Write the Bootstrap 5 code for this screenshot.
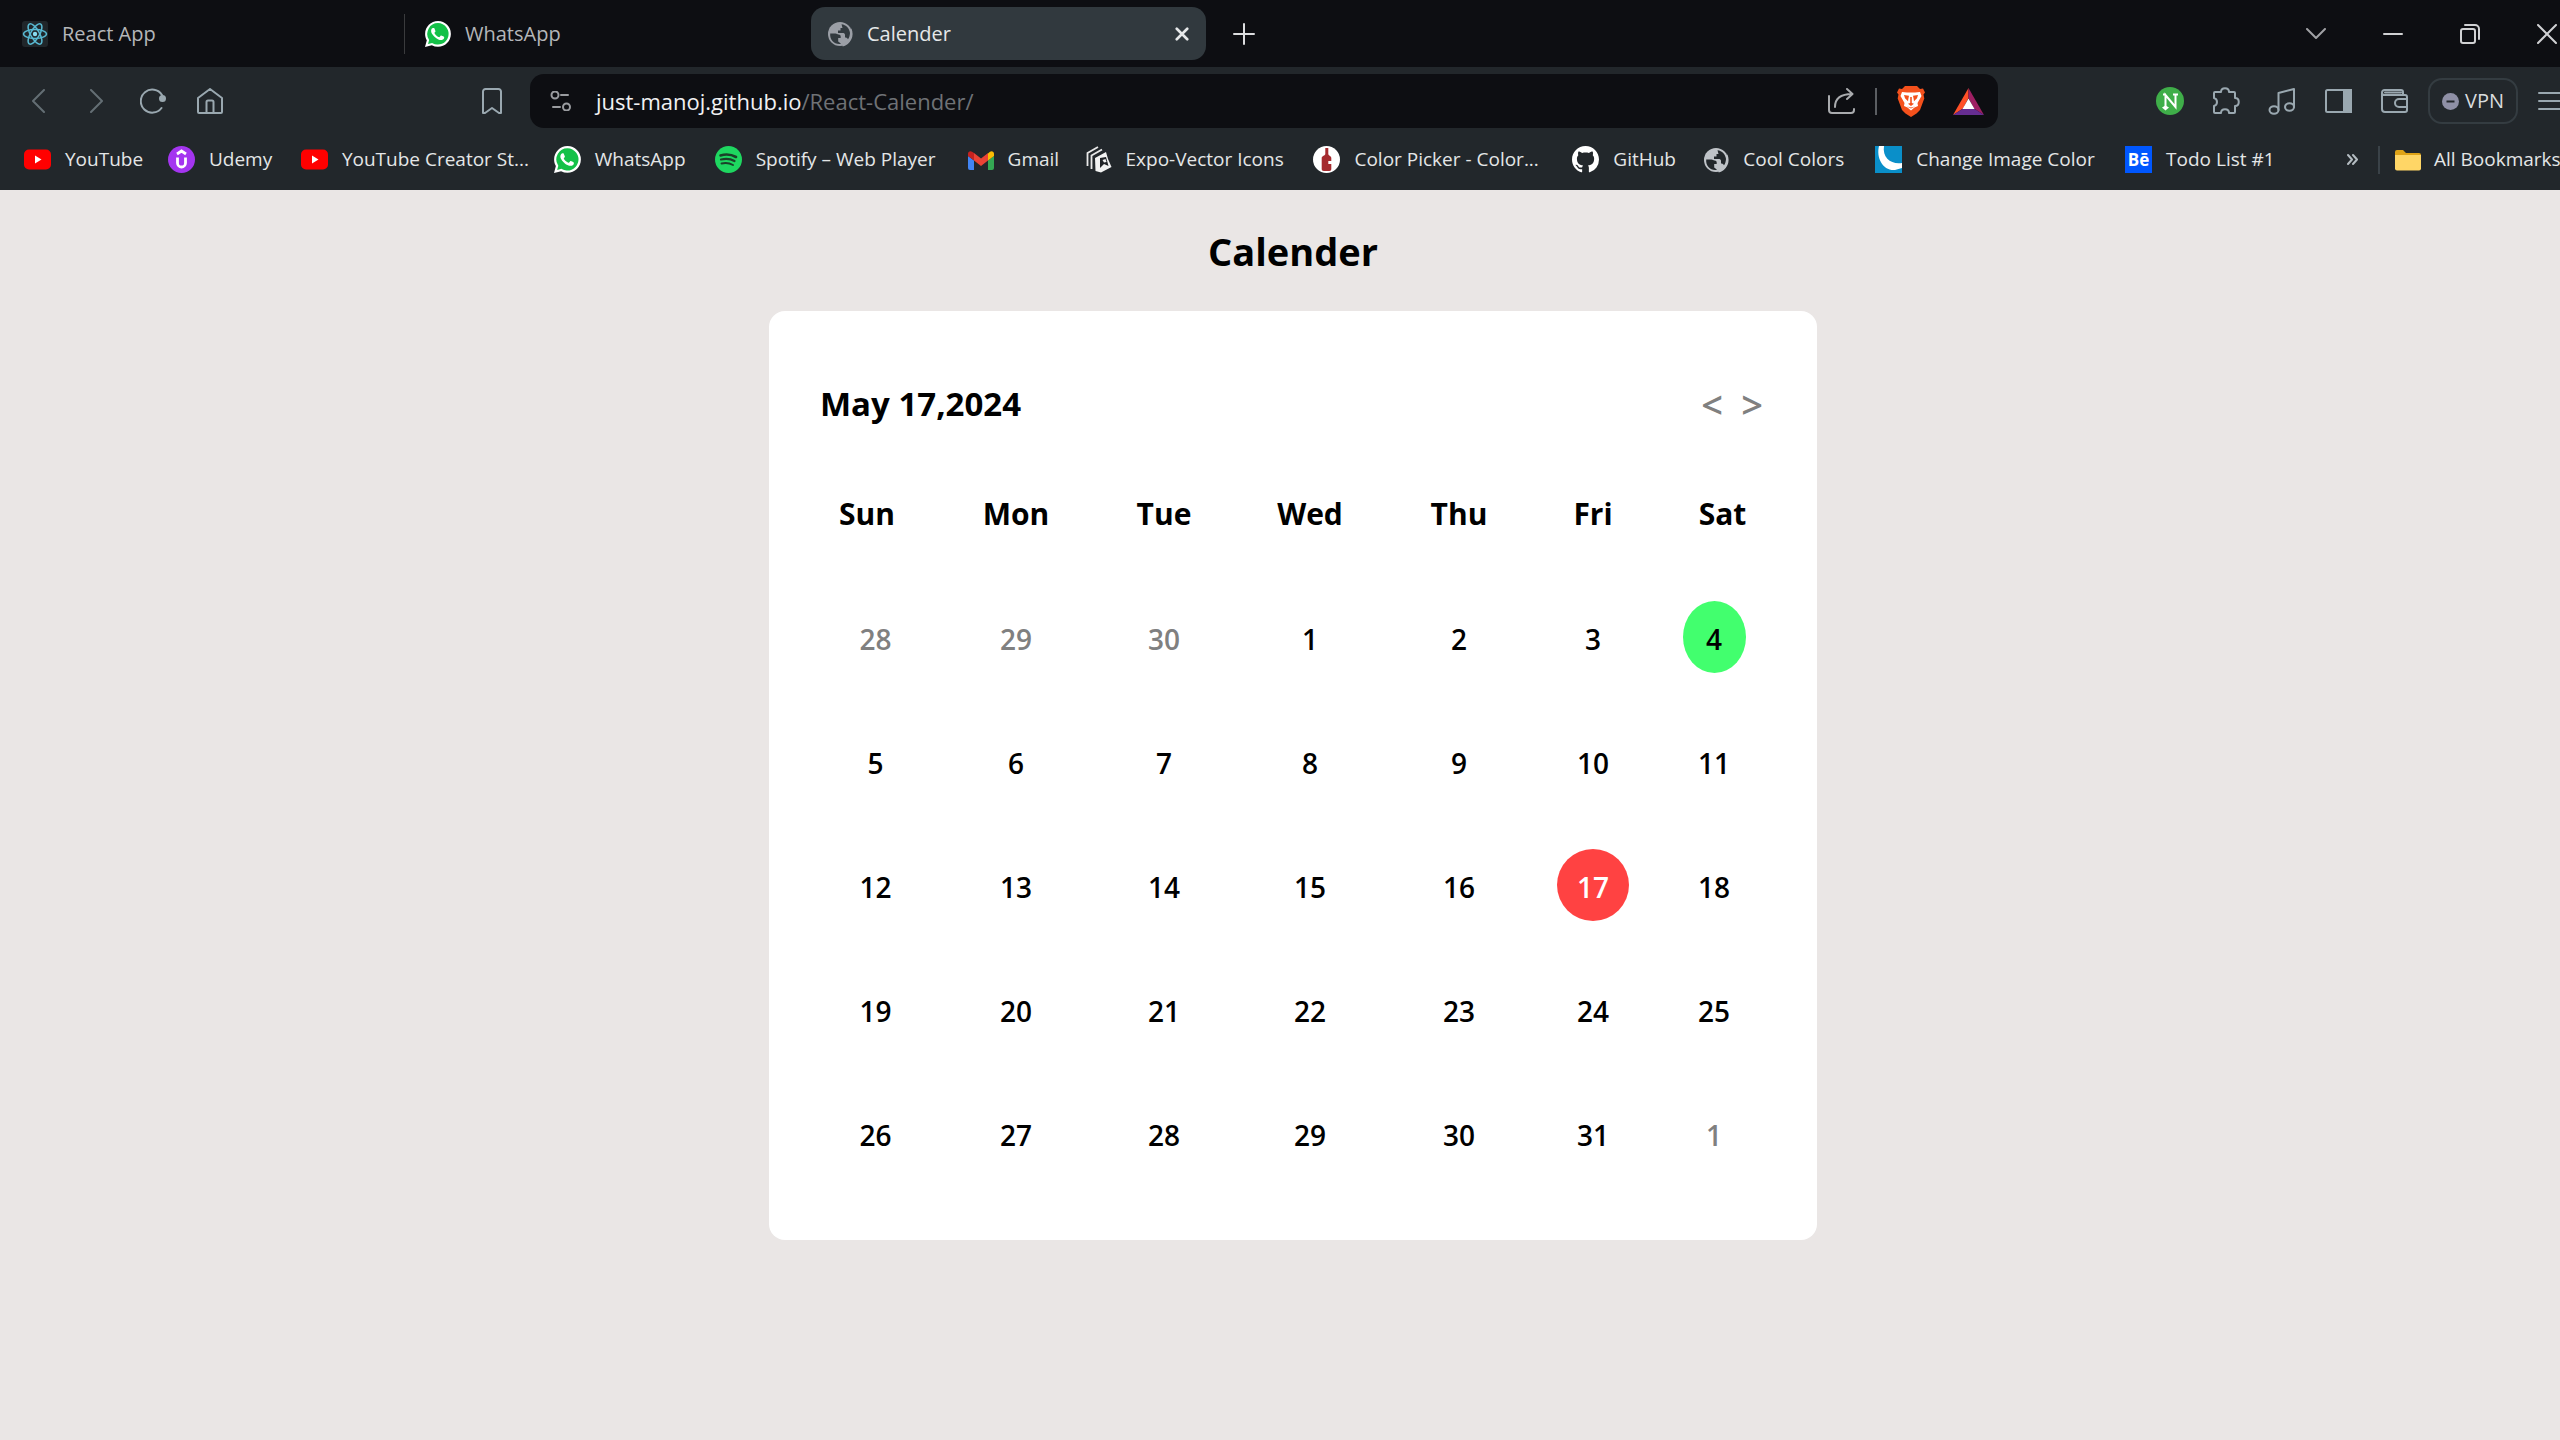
<!doctype html>
<html lang="en">
<head>
<meta charset="utf-8">
<meta name="viewport" content="width=device-width, initial-scale=1">
<title>Calender</title>
<link href="https://cdn.jsdelivr.net/npm/bootstrap@5.3.0/dist/css/bootstrap.min.css" rel="stylesheet">
<style>
  :root { --ink: #0d0e12; --bar: #22272b; --line: #3a4248; --glyph: #9aa8b0; }
  body { font-family: "Open Sans", "Noto Sans", sans-serif; background: #eae6e5; color: #000; min-height: 100vh; }
  svg { display: block; flex: none; }
  button { font-family: inherit; }
  .stroke { fill: none; stroke: currentColor; stroke-width: 2; stroke-linecap: round; stroke-linejoin: round; }
  .plain { background: none; border: 0; padding: 0; color: inherit; display: flex; align-items: center; justify-content: center; }

  /* tab strip */
  .tab-strip { background: var(--ink); height: 67px; color: #b4b6b9; font-size: 20px; padding-left: 22px; }
  .page-tab { color: inherit; gap: 14px; height: 53px; }
  .page-tab:hover { color: #fff; }
  .tab-one { width: 382px; }
  .tab-two { width: 406px; padding-left: 20px; }
  .tab-rule { width: 1px; height: 40px; background: #3a3b3d; }
  .tab-live { width: 395px; padding: 0 17px 0 16px; background: #31393e; color: #e6e8e9; border-radius: 14px; }
  .win-set { color: #d0d1d3; }
  .win-btn { width: 77px; height: 67px; }
  .win-last { width: 52px; padding-left: 25px; }
  .new-tab { width: 75px; height: 67px; color: #dcdddf; }

  /* toolbar */
  .tool-row { background: var(--bar); height: 68px; color: var(--glyph); padding-left: 10px; }
  .nav-keys { width: 510px; margin-right: 10px; }
  .tool-btn { width: 57px; height: 54px; }
  .tool-set .tool-btn { width: 56px; }
  .tool-set { margin-left: 144px; }
  .faded { opacity: .55; }
  .omnibox { background: var(--ink); height: 54px; border-radius: 14px; padding: 0 14px 0 20px; font-size: 22px; color: #f1f1f2; }
  .omnibox .path-part { color: #6f7276; }
  .omni-icons { gap: 20px; }
  .omni-rule { width: 2px; height: 27px; background: #5b5e62; }
  .vpn { width: 90px; height: 46px; border: 2px solid #343c41; border-radius: 14px; margin: 0 19px 0 6px; color: #d8dbdd; font-size: 20px; gap: 6px; }

  /* bookmarks */
  .mark-row { background: var(--bar); height: 55px; padding: 0 0 6px 24px; font-size: 19px; color: #e4e6e7; }
  .mark-grid { display: grid; grid-template-columns: 144fr 133fr 253fr 161fr 253fr 118fr 228fr 259fr 131fr 172fr 250fr 222fr; flex: 1 1 auto; }
  .mark-link { display: flex; align-items: center; gap: 14px; color: inherit; text-decoration: none; white-space: nowrap; min-width: 0; }
  .mark-tail { width: 182px; gap: 13px; border-left: 2px solid var(--line); height: 28px; padding-left: 15px; }

  /* calendar */
  .page-area { padding-left: 26px; }
  .page-title { font-size: 38px; font-weight: 700; line-height: 52px; margin: 0; padding: 35px 0 34px; }
  .cal-card { width: 1048px; max-width: 100%; background: #fff; border-radius: 16px; padding: 41px 40px 45px 41px; }
  .cal-head { height: 104px; padding: 0 5px 0 10px; }
  .cal-date { font-size: 33px; font-weight: 700; margin: 0; }
  .step { font-size: 38px; font-weight: 600; line-height: 52px; width: 40px; color: #808080; }
  .cal-grid { width: 100%; table-layout: fixed; text-align: center; }
  .cal-grid th { height: 119px; padding: 0 0 4px; font-size: 30px; font-weight: 700; }
  .cal-grid th:first-child { padding-right: 17px; }
  .cal-grid th:last-child { padding-left: 17px; }
  .cal-grid td { height: 124px; padding: 0; }
  .day { height: 72px; min-width: 63px; padding: 4px 20px 0; border-radius: 50%; margin: 0 auto; font-size: 28px; font-weight: 600; line-height: 40px; color: #000; }
  .day.other { color: #808080; }
  .day.today { background: #ff4242; color: #fff; }
  .day.picked { background: #42ff6e; }
</style>
<script src="https://cdn.jsdelivr.net/npm/bootstrap@5.3.0/dist/js/bootstrap.bundle.min.js"></script>
</head>
<body>
<svg width="0" height="0" class="position-absolute" aria-hidden="true">
  <symbol id="whatsapp" viewBox="0 0 16 16">
    <path fill="#fff" d="M13.6 2.33A7.85 7.85 0 0 0 8 0C3.63 0 .07 3.56.06 7.93c0 1.4.37 2.76 1.06 3.96L0 16l4.2-1.1a7.9 7.9 0 0 0 3.8.96c4.36 0 7.92-3.55 7.93-7.93a7.9 7.9 0 0 0-2.33-5.6z"/>
    <path fill="#14c148" d="M8 1.3A6.6 6.6 0 0 0 2.4 11.4l.16.25-.7 2.5 2.53-.67.24.14A6.6 6.6 0 1 0 8 1.3z"/>
    <path fill="#fff" d="M11.4 9.6c-.2-.1-1.17-.578-1.353-.644-.18-.067-.315-.099-.445.099-.133.197-.513.644-.627.775-.114.133-.232.148-.43.05-.197-.1-.836-.308-1.592-.985-.59-.525-.985-1.175-1.103-1.372-.114-.198-.011-.304.088-.403.087-.088.197-.232.296-.346.1-.114.133-.198.198-.33.065-.134.034-.248-.015-.347-.05-.099-.445-1.076-.612-1.47-.16-.389-.323-.335-.445-.34-.114-.007-.247-.007-.38-.007a.73.73 0 0 0-.529.247c-.182.198-.691.677-.691 1.654s.71 1.916.81 2.049c.098.133 1.394 2.132 3.383 2.992.47.205.84.326 1.129.418.475.152.904.129 1.246.08.38-.058 1.171-.48 1.338-.943.164-.464.164-.86.114-.943-.049-.084-.182-.133-.38-.232z"/>
  </symbol>
  <symbol id="globe" viewBox="0 0 26 26">
    <circle cx="13" cy="13" r="12" fill="currentColor"/>
    <path fill="var(--land)" d="M3.200 12.500h5.300c1.500 0 1.700 1 3 1 1.500 0 2.200.8 2.200 2v1.500h-2.500v3.500l2.800 2.300C8 24 2.500 19.500 3.200 12.500zM14.500 3.200c4.500.6 8 4 8.500 8.800-.2 2.500-.7 4.500-2 6.300-.6-1.300-1.500-1.800-3-1.800v-2.500c0-1.500-1-2-2.500-2H11V9.500h2.500V7h2z"/>
    <path fill="none" stroke="currentColor" stroke-width="2" d="M23.500 8a12 12 0 0 1-8 16.500"/>
  </symbol>
  <symbol id="youtube" viewBox="0 0 27 27">
    <rect x="0" y="3.500" width="27" height="20" rx="5" fill="#f00"/><path d="M11 9.500v8l6.500-4z" fill="#fff"/>
  </symbol>
</svg>

<header>
  <!-- tab strip -->
  <div class="tab-strip d-flex align-items-center">
    <a href="#" class="page-tab tab-one d-flex align-items-center text-decoration-none">
      <svg width="26" height="26" viewBox="0 0 26 26"><rect width="26" height="26" rx="3" fill="#20262a"/><g fill="none" stroke="#58b9d2" stroke-width="1.500"><ellipse cx="13" cy="13" rx="11.500" ry="4.400"/><ellipse cx="13" cy="13" rx="11.500" ry="4.400" transform="rotate(60 13 13)"/><ellipse cx="13" cy="13" rx="11.500" ry="4.400" transform="rotate(120 13 13)"/></g><circle cx="13" cy="13" r="2.200" fill="#8adcf0"/></svg>
      <span>React App</span>
    </a>
    <span class="tab-rule"></span>
    <a href="#" class="page-tab tab-two d-flex align-items-center text-decoration-none">
      <svg width="26" height="26"><use href="#whatsapp"/></svg>
      <span>WhatsApp</span>
    </a>
    <div class="page-tab tab-live d-flex align-items-center">
      <svg width="26" height="26" style="--land:#31393e;color:#9b9fa6"><use href="#globe"/></svg>
      <span class="flex-grow-1">Calender</span>
      <button class="plain" aria-label="Close tab"><svg width="14" height="14" viewBox="0 0 16 16" class="stroke"><path stroke-width="3" d="M2 2l12 12M14 2L2 14"/></svg></button>
    </div>
    <button class="plain new-tab" aria-label="New tab"><svg width="22" height="22" viewBox="0 0 22 22" class="stroke"><path d="M11 1v20M1 11h20"/></svg></button>
    <div class="win-set d-flex ms-auto">
      <button class="plain win-btn" aria-label="Search tabs"><svg width="20" height="12" viewBox="0 0 20 12" class="stroke" color="#a0a1a4"><path d="M1 1l9 9 9-9"/></svg></button>
      <button class="plain win-btn" aria-label="Minimize"><svg width="20" height="20" viewBox="0 0 20 20" class="stroke"><path d="M1 10h18"/></svg></button>
      <button class="plain win-btn" aria-label="Restore"><svg width="20" height="20" viewBox="0 0 20 20" class="stroke"><path d="M3 5h10a2 2 0 0 1 2 2v10a2 2 0 0 1-2 2H3a2 2 0 0 1-2-2V7a2 2 0 0 1 2-2zM5 1h10a4 4 0 0 1 4 4v10"/></svg></button>
      <button class="plain win-btn win-last" aria-label="Close window"><svg width="20" height="20" viewBox="0 0 20 20" class="stroke"><path d="M1 1l18 18M19 1L1 19"/></svg></button>
    </div>
  </div>

  <!-- toolbar -->
  <div class="tool-row d-flex align-items-center">
    <nav class="nav-keys d-flex" aria-label="Navigation">
      <button class="plain tool-btn faded" aria-label="Back"><svg width="26" height="26" viewBox="0 0 26 26" class="stroke"><path d="M18 2L7 13l11 11"/></svg></button>
      <button class="plain tool-btn faded" aria-label="Forward"><svg width="26" height="26" viewBox="0 0 26 26" class="stroke"><path d="M8 2l11 11L8 24"/></svg></button>
      <button class="plain tool-btn" aria-label="Reload"><svg width="26" height="26" viewBox="0 0 26 26" class="stroke"><path d="M21.500 20a11.500 11.500 0 1 1 .5-13"/><circle cx="22.500" cy="10.500" r="2.500" fill="currentColor"/></svg></button>
      <button class="plain tool-btn" aria-label="Home"><svg width="26" height="26" viewBox="0 0 26 26" class="stroke"><path d="M1 24V10L13 1l12 9v14a1 1 0 0 1-1 1H2a1 1 0 0 1-1-1zM9.500 25V14a1.500 1.500 0 0 1 1.500-1.500h4a1.500 1.500 0 0 1 1.500 1.500v11"/></svg></button>
      <button class="plain tool-btn ms-auto" aria-label="Bookmark this page"><svg width="20" height="26" viewBox="0 0 20 26" class="stroke"><path d="M1 3.500A2.500 2.500 0 0 1 3.500 1h13A2.500 2.500 0 0 1 19 3.500V25h-2l-7-5-7 5H1z"/></svg></button>
    </nav>
    <div class="omnibox d-flex align-items-center flex-grow-1">
      <svg width="22" height="20" viewBox="0 0 22 20" class="stroke" color="#9a9ca0"><circle cx="5" cy="4" r="3.500"/><path d="M11 4h7M3 16h7"/><circle cx="16.500" cy="16" r="3.500"/></svg>
      <div class="flex-grow-1 ps-4 text-nowrap">just-manoj.github.io<span class="path-part">/React-Calender/</span></div>
      <div class="omni-icons d-flex align-items-center">
        <button class="plain" aria-label="Share"><svg width="27" height="26" viewBox="0 0 27 26" class="stroke" color="#a9abae"><path d="M1 8v14a3 3 0 0 0 3 3h19a3 3 0 0 0 3-3v-1"/><path d="M7 19C7 11 12 6 24 6M19 1l5.500 5L19 11"/></svg></button>
        <span class="omni-rule"></span>
        <button class="plain" aria-label="Brave Shields"><svg width="28" height="32" viewBox="0 0 28 32"><path fill="#f4511c" d="M8 1h12l3 3 3-.5 2 4-1.500 2 .8 4L23 25l-3.500 3.500L14 32l-5.500-3.500L5 25 .7 13.500l.8-4L0 7.500l2-4 3 .5z"/><path fill="#fff" d="M5 7l5 .5h8l5-.5 1.500 4-4 7 .5 3-3.500 1.500L14 25.500 10.500 22.500 7 21l.5-3-4-7z"/><path fill="#f4511c" d="M7 10l5 .8-.7 3.400-.3 2-3-3zM21 10l-5 .8.700 3.400.3 2 3-3zM13.200 12h1.600v6l2.200.8-3 2.200-3-2.200 2.200-.8zM10 21.500l4 1 4-1-4 2z"/></svg></button>
        <button class="plain ms-2" aria-label="Brave Rewards"><svg width="31" height="27" viewBox="0 0 31 27"><path fill="#ff5027" d="M15.500 0L0 27l10-6.500 5.500-10.500z"/><path fill="#9e1f63" d="M15.500 0L31 27l-10-6.500L15.500 10z"/><path fill="#662d91" d="M0 27h31l-10-6.500H10z"/><path fill="#fff" d="M15.500 10.500l6 10.500h-12z"/></svg></button>
      </div>
    </div>
    <div class="tool-set d-flex align-items-center">
      <button class="plain tool-btn" aria-label="Notes extension"><svg width="28" height="28" viewBox="0 0 28 28"><circle cx="14" cy="14" r="14" fill="#3fae49"/><path d="M9.500 21V8l10 12V7M7 7.500h3M17 7.500h5" fill="none" stroke="#fff" stroke-width="2"/><path d="M6 20.500l3.500-2 3.500 2-3.500 3z" fill="#fff"/></svg></button>
      <button class="plain tool-btn" aria-label="Extensions"><svg width="28" height="28" viewBox="0 0 28 28" class="stroke"><path d="M3 5h6c0-5 8-5 8 0h5a1 1 0 0 1 1 1v5c5 0 5 8 0 8v6a1 1 0 0 1-1 1h-5c0-5-8-5-8 0H3a1 1 0 0 1-1-1v-6c4-1 4-7 0-8V6a1 1 0 0 1 1-1z"/></svg></button>
      <button class="plain tool-btn" aria-label="Media"><svg width="28" height="28" viewBox="0 0 28 28" class="stroke"><ellipse cx="6" cy="23" rx="4.500" ry="3.700"/><ellipse cx="21.500" cy="20" rx="4.500" ry="3.700"/><path d="M10.500 23V6L26 2v18"/></svg></button>
      <button class="plain tool-btn" aria-label="Sidebar"><svg width="27" height="26" viewBox="0 0 27 26" class="stroke"><rect x="1" y="2" width="25" height="22" rx="1.500"/><path fill="currentColor" stroke="none" d="M18 1h9v24h-9z"/></svg></button>
      <button class="plain tool-btn" aria-label="Wallet"><svg width="27" height="26" viewBox="0 0 27 26" class="stroke"><path d="M1 5v16a3 3 0 0 0 3 3h20a2 2 0 0 0 2-2V9a2 2 0 0 0-2-2H3.500A2.500 2.500 0 0 1 1 4.500 2.500 2.500 0 0 1 3.500 2H20a2 2 0 0 1 2 2v3M26 11h-8a4 4 0 0 0 0 8h8M4 4.500h16"/></svg></button>
      <button class="plain vpn" aria-label="VPN off"><svg width="17" height="17" viewBox="0 0 17 17"><circle cx="8.500" cy="8.500" r="8.500" fill="#8f90a6"/><path d="M4.500 8.500h8" stroke="#22272b" stroke-width="2"/></svg><span>VPN</span></button>
      <button class="plain" aria-label="Menu"><svg width="23" height="20" viewBox="0 0 23 20" class="stroke"><path d="M2 2h24M2 10h24M2 18h24"/></svg></button>
    </div>
  </div>

  <!-- bookmarks -->
  <div class="mark-row d-flex align-items-center overflow-hidden">
    <nav class="mark-grid" aria-label="Bookmarks">
      <a class="mark-link" href="#"><svg width="27" height="27"><use href="#youtube"/></svg>YouTube</a>
      <a class="mark-link" href="#"><svg width="27" height="27" viewBox="0 0 27 27"><circle cx="13.500" cy="13.500" r="13.500" fill="#a435f0"/><path d="M9 8l4.500-3L18 8M9.500 11.500V17a4 4 0 0 0 8 0v-5.500" fill="none" stroke="#fff" stroke-width="2.800"/></svg>Udemy</a>
      <a class="mark-link" href="#"><svg width="27" height="27"><use href="#youtube"/></svg>YouTube Creator St...</a>
      <a class="mark-link" href="#"><svg width="27" height="27"><use href="#whatsapp"/></svg>WhatsApp</a>
      <a class="mark-link" href="#"><svg width="27" height="27" viewBox="0 0 27 27"><circle cx="13.500" cy="13.500" r="13.500" fill="#1ed760"/><g fill="none" stroke="#1b4029" stroke-linecap="round"><path stroke-width="2.600" d="M5.500 9.500c5-1.500 11-1 15.500 1.500"/><path stroke-width="2.200" d="M6 13.500c5-1.300 9.500-.8 13.500 1.500"/><path stroke-width="1.900" d="M6.500 17.500c4-1 8-.6 11.500 1.500"/></g></svg>Spotify – Web Player</a>
      <a class="mark-link" href="#"><svg width="26" height="26" viewBox="0 0 26 26"><path fill="#4285f4" d="M0 9l6 4.500V23H2a2 2 0 0 1-2-2z"/><path fill="#34a853" d="M20 13.500L26 9v12a2 2 0 0 1-2 2h-4z"/><path fill="#fbbc04" d="M20 6.500l2-1.800c1.800-1.300 4 0 4 2V9l-6 4.500z"/><path fill="#ea4335" d="M6 6l7 5.500L20 6v7.500L13 19l-7-5.500z"/><path fill="#c5221f" d="M0 9V6.700c0-2 2.200-3.300 4-2L6 6v7.500z"/></svg>Gmail</a>
      <a class="mark-link" href="#"><svg width="26" height="27" viewBox="0 0 26 27"><g fill="none" stroke="#e8e8e8" stroke-width="1.800"><path d="M1.500 20V7L12 1M5.500 23V9.500L16 3.500"/></g><path fill="#f2f2f2" d="M9 12l11-6 2 7 3.500 8L15 26.500 9.500 25z"/><path fill="#202327" d="M14 12l6-1 2.500 9-4.500-2-4 4z"/><path fill="#f2f2f2" d="M16.500 14l3-1 1 3-2.500.500z"/></svg>Expo-Vector Icons</a>
      <a class="mark-link" href="#"><svg width="27" height="27" viewBox="0 0 27 27"><circle cx="13.500" cy="13.500" r="13.500" fill="#fff"/><path fill="#a52a2e" d="M12.300 2h3v6c0 1.500 3 2 3 4v3h-3v3h3v5c0 1.200-.6 2-2 2H11c-1.600 0-2.300-.8-2.300-2V12c0-2 3.600-2.500 3.600-4z"/></svg>Color Picker - Color...</a>
      <a class="mark-link" href="#"><svg width="27" height="27" viewBox="0 0 16 16"><path fill="#fff" d="M8 0C3.580 0 0 3.580 0 8c0 3.540 2.290 6.530 5.470 7.590.4.070.55-.17.55-.38 0-.19-.01-.82-.01-1.490-2.010.37-2.530-.49-2.690-.94-.09-.23-.48-.94-.82-1.130-.28-.15-.68-.52-.01-.53.63-.01 1.080.58 1.230.82.72 1.210 1.870.87 2.330.66.07-.52.28-.87.51-1.070-1.780-.2-3.640-.89-3.640-3.950 0-.87.31-1.590.82-2.150-.08-.2-.36-1.020.08-2.120 0 0 .67-.21 2.200.82.64-.18 1.320-.27 2-.27s1.360.09 2 .27c1.530-1.040 2.200-.82 2.200-.82.44 1.100.16 1.920.08 2.120.51.56.82 1.270.82 2.150 0 3.070-1.870 3.750-3.650 3.950.29.25.54.73.54 1.480 0 1.070-.01 1.930-.01 2.200 0 .21.15.46.55.38A8.010 8.010 0 0 0 16 8c0-4.420-3.580-8-8-8"/></svg>GitHub</a>
      <a class="mark-link" href="#"><svg width="26" height="26" style="--land:#22272b;color:#bfc3c8"><use href="#globe"/></svg>Cool Colors</a>
      <a class="mark-link" href="#"><svg width="27" height="27" viewBox="0 0 27 27"><path fill="#0a8fc9" d="M0 0h27v27H0z"/><path fill="#fff" d="M4 0C1 12 8 25 20 24l7-2v-5C17 19 7 12 9 0z"/></svg>Change Image Color</a>
      <a class="mark-link" href="#"><svg width="27" height="27" viewBox="0 0 27 27"><path fill="#0057ff" d="M0 0h27v27H0z"/><text x="13.500" y="20" text-anchor="middle" font-size="17" font-weight="700" fill="#fff">Bē</text></svg>Todo List #1</a>
    </nav>
    <button class="plain me-3 pe-1" aria-label="More bookmarks"><svg width="11" height="13" viewBox="0 0 11 13" class="stroke" color="#b4bcc1"><path d="M1 2l4 4.500L1 11M6 2l4 4.500L6 11"/></svg></button>
    <a href="#" class="mark-link mark-tail"><svg width="26" height="26" viewBox="0 0 26 26"><path fill="#dfa317" d="M0 5a2 2 0 0 1 2-2h6l3 3h13a2 2 0 0 1 2 2v13H0z"/><path fill="#ffd666" d="M0 8h26v13.500a2 2 0 0 1-2 2H2a2 2 0 0 1-2-2z"/></svg>All Bookmarks</a>
  </div>
</header>

<main class="page-area d-flex flex-column align-items-center">
  <h1 class="page-title">Calender</h1>
  <section class="cal-card">
    <div class="cal-head d-flex align-items-center">
      <h2 class="cal-date flex-grow-1">May 17,2024</h2>
      <button class="plain step" aria-label="Previous month">&lt;</button>
      <button class="plain step" aria-label="Next month">&gt;</button>
    </div>
    <table class="cal-grid">
      <colgroup><col width="131"><col width="150"><col width="146"><col width="146"><col width="152"><col width="116"><col width="126"></colgroup>
      <thead><tr><th scope="col">Sun</th><th scope="col">Mon</th><th scope="col">Tue</th><th scope="col">Wed</th><th scope="col">Thu</th><th scope="col">Fri</th><th scope="col">Sat</th></tr></thead>
      <tbody>
        <tr><td><button class="plain day other">28</button></td><td><button class="plain day other">29</button></td><td><button class="plain day other">30</button></td><td><button class="plain day">1</button></td><td><button class="plain day">2</button></td><td><button class="plain day">3</button></td><td><button class="plain day picked">4</button></td></tr>
        <tr><td><button class="plain day">5</button></td><td><button class="plain day">6</button></td><td><button class="plain day">7</button></td><td><button class="plain day">8</button></td><td><button class="plain day">9</button></td><td><button class="plain day">10</button></td><td><button class="plain day">11</button></td></tr>
        <tr><td><button class="plain day">12</button></td><td><button class="plain day">13</button></td><td><button class="plain day">14</button></td><td><button class="plain day">15</button></td><td><button class="plain day">16</button></td><td><button class="plain day today">17</button></td><td><button class="plain day">18</button></td></tr>
        <tr><td><button class="plain day">19</button></td><td><button class="plain day">20</button></td><td><button class="plain day">21</button></td><td><button class="plain day">22</button></td><td><button class="plain day">23</button></td><td><button class="plain day">24</button></td><td><button class="plain day">25</button></td></tr>
        <tr><td><button class="plain day">26</button></td><td><button class="plain day">27</button></td><td><button class="plain day">28</button></td><td><button class="plain day">29</button></td><td><button class="plain day">30</button></td><td><button class="plain day">31</button></td><td><button class="plain day other">1</button></td></tr>
      </tbody>
    </table>
  </section>
</main>
</body>
</html>
